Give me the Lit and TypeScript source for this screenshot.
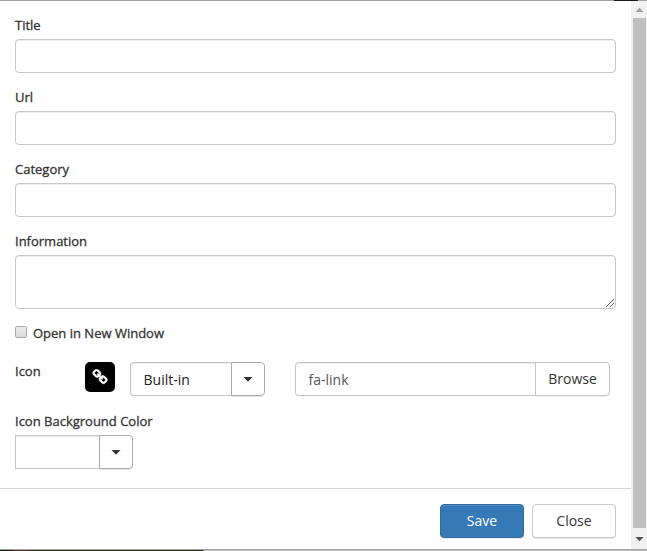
import { LitElement, html, css } from "lit";
import { customElement } from "lit/decorators.js";

@customElement("app-root")
class AppRoot extends LitElement {
  static styles = css`
    :host {
      display: flex;
      flex-direction: column;
      box-sizing: border-box;
      width: 647px;
      height: 551px;
      overflow: hidden;
      background: #fff;
      color: #333;
      font: 14px/20px "Open Sans", "Noto Sans", sans-serif;
    }
    * { box-sizing: border-box; }
    .top { height: 1px; background: linear-gradient(90deg, #a3a3a3 614px, #181818 614px 638px, #a3a3a3 638px); }
    .dialog { display: flex; height: 548px; }
    .page { flex: 1; display: flex; flex-direction: column; }
    .body { height: 488px; padding: 15px 15px 0; border-bottom: 1px solid #d3d3d3; }
    label, .label { display: block; font-size: 13px; line-height: 18px; -webkit-text-stroke: 0.3px #333; }
    .group { height: 72px; }
    .field, textarea {
      display: block;
      width: 601px;
      height: 34px;
      margin: 5px 0 0;
      padding: 6px 12px;
      border: 1px solid #c8c8c8;
      border-radius: 4px;
      background: #fff;
      box-shadow: inset 0 1px 1px rgba(0, 0, 0, 0.075);
      font: inherit;
      color: #555;
      outline: none;
    }
    textarea { height: 54px; resize: none; }
    .area { position: relative; height: 92px; }
    .grip { position: absolute; left: 591px; top: 66px; width: 10px; height: 10px; }
    .check { display: flex; align-items: center; height: 18px; }
    .box { width: 12px; height: 12px; margin: -3px 6px 0 0; border: 1px solid #a9a9a9; border-radius: 2px; background: linear-gradient(#ececec, #dcdcdc); }
    .row { display: flex; margin-top: 20px; height: 34px; }
    .row .label { width: 70px; }
    .tile { display: flex; width: 30px; height: 30px; border-radius: 5px; background: #000; margin-right: 15px; align-items: center; justify-content: center; }
    .combo { display: flex; height: 34px; }
    .value { width: 101px; border: 1px solid #c5c5c5; border-right: 0; border-radius: 4px 0 0 4px; padding: 7px 12px 7px 12.5px; color: #222; box-shadow: inset 0 1px 1px rgba(0, 0, 0, 0.075); }
    .arrow { display: flex; align-items: center; justify-content: center; width: 34px; border: 1px solid #aaa; border-radius: 0 4px 4px 0; box-shadow: 0 1px 1px rgba(0, 0, 0, 0.1); }
    .arrow svg { display: block; }
    .combo.file { margin-left: 30px; }
    .file .value { width: 240px; color: #555; }
    .browse { width: 75px; border: 1px solid #c5c5c5; border-radius: 0 4px 4px 0; text-align: center; line-height: 32px; box-shadow: 0 1px 1px rgba(0, 0, 0, 0.08); }
    .color-label { margin-top: 16px; }
    .color { margin-top: 5px; }
    .color .value { width: 84px; border-radius: 0; }
    .footer { display: flex; justify-content: flex-end; gap: 8px; padding: 15px 15px 0; }
    button { width: 84px; height: 34px; padding: 0; border: 1px solid #c8c8c8; border-radius: 4px; background: #fff; color: #333; font: inherit; box-shadow: 0 1px 1px rgba(0, 0, 0, 0.1); }
    .save { background: #337ab7; border-color: #2e6da4; color: #fff; box-shadow: inset 0 1px 0 rgba(255, 255, 255, 0.15), 0 1px 1px rgba(0, 0, 0, 0.075); }
    .scroll { display: flex; flex-direction: column; align-items: center; width: 16px; background: #f1f1f1; }
    .scroll svg { display: block; width: 16px; height: 17px; }
    .thumb { width: 13px; height: 510px; margin-left: 1px; background: #c1c1c1; }
    .edge { height: 1px; background: #a6a6a6; }
    .under { height: 1px; background: linear-gradient(90deg, #17120c 10px, #553322 16px 28px, #2b3012 34px 203px, #bdbdbd 204px); }
  `;

  private caret() {
    return html`<svg width="10" height="5" viewBox="0 0 10 5"><path d="M.5 0h9L5 4.800z" fill="#333" /></svg>`;
  }

  render() {
    return html`
      <div class="top"></div>
      <div class="dialog">
        <div class="page">
          <div class="body">
            ${["Title", "Url", "Category"].map(
              (name) => html`<div class="group"><label>${name}</label><input class="field" aria-label=${name} /></div>`
            )}
            <div class="group area">
              <label>Information</label>
              <textarea aria-label="Information"></textarea>
              <svg class="grip" viewBox="0 0 10 10" shape-rendering="crispEdges" fill="none" stroke="#666">
                <path d="M0 8.5h1M1 7.5h1M2 6.5h1M3 5.5h1M4 4.5h1M5 3.5h1M6 2.5h1M7 1.5h1M4 8.5h1M5 7.5h1M6 6.5h1M7 5.5h1" />
              </svg>
            </div>
            <div class="check"><span class="box"></span><span class="label">Open in New Window</span></div>
            <div class="row">
              <span class="label">Icon</span>
              <span class="tile">
                <svg width="16" height="16" viewBox="0 0 1792 1792" fill="#fff" stroke="#fff" stroke-width="70">
                  <path d="M1520 1216q0-40-28-68l-208-208q-28-28-68-28-42 0-72 32 3 3 19 18.500t21.500 21.500 15 19 13 25.500 3.500 27.500q0 40-28 68t-68 28q-15 0-27.500-3.500t-25.500-13-19-15-21.500-21.500-18.500-19q-33 31-33 73 0 40 28 68l206 207q27 27 68 27 40 0 68-26l147-146q28-28 28-67zm-703-705q0-40-28-68l-206-207q-28-28-68-28-39 0-68 27l-147 146q-28 28-28 67 0 40 28 68l208 208q27 27 68 27 42 0 72-31-3-3-19-18.500t-21.500-21.500-15-19-13-25.500-3.500-27.500q0-40 28-68t68-28q15 0 27.500 3.500t25.500 13 19 15 21.500 21.500 18.500 19q33-31 33-73zm895 705q0 120-85 203l-147 146q-83 83-203 83-121 0-204-85l-206-207q-83-83-83-203 0-123 88-209l-88-88q-86 88-208 88-120 0-204-84l-208-208q-84-84-84-204t85-203l147-146q83-83 203-83 121 0 204 85l206 207q83 83 83 203 0 123-88 209l88 88q86-88 208-88 120 0 204 84l208 208q84 84 84 204z" />
                </svg>
              </span>
              <div class="combo"><span class="value">Built-in</span><span class="arrow">${this.caret()}</span></div>
              <div class="combo file"><span class="value">fa-link</span><span class="browse">Browse</span></div>
            </div>
            <span class="label color-label">Icon Background Color</span>
            <div class="combo color"><span class="value"></span><span class="arrow">${this.caret()}</span></div>
          </div>
          <div class="footer"><button class="save">Save</button><button>Close</button></div>
        </div>
        <div class="scroll">
          <svg viewBox="0 0 16 17"><path d="M4.500 11l4-4.300 4 4.300z" fill="#a3a3a3" /></svg>
          <div class="thumb"></div>
          <svg viewBox="0 0 16 17"><path d="M4.500 9l4 4.300 4-4.300z" fill="#505050" /></svg>
        </div>
      </div>
      <div class="edge"></div>
      <div class="under"></div>
    `;
  }
}
